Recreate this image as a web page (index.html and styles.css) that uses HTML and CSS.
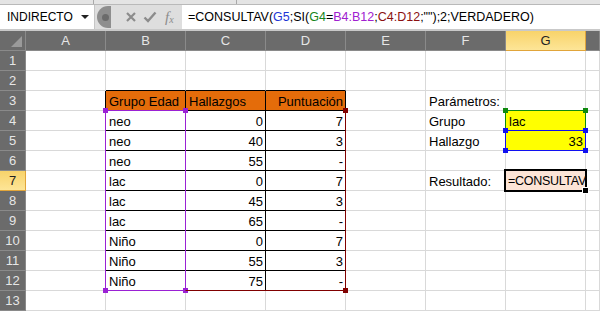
FILE: index.html
```html
<!DOCTYPE html>
<html lang="es">
<head>
    <meta charset="UTF-8">
    <title>CONSULTAV - Hallazgos</title>
    <link rel="stylesheet" href="styles.css">
</head>
<body>
    <div class="ribbon-edge"><span class="seg seg-1"></span><span class="seg seg-2"></span></div>
    <div class="formula-bar">
        <div class="name-box">
            <span>INDIRECTO</span>
            <span class="caret"></span>
        </div>
        <div class="tools">
            <span class="grip"><i></i></span>
            <svg class="tool" width="12" height="12" viewBox="0 0 12 12"><path d="M2 2 L10 10 M10 2 L2 10" stroke="#8c8c8c" stroke-width="2.2" fill="none"/></svg>
            <svg class="tool" width="14" height="12" viewBox="0 0 14 12"><path d="M1.5 6.5 L5 10 L12.5 1.5" stroke="#8c8c8c" stroke-width="2.4" fill="none"/></svg>
            <span class="fx">f<sub>x</sub></span>
        </div>
        <div class="formula">=CONSULTAV(<span class="ref-blue">G5</span>;SI(<span class="ref-green">G4</span>=<span class="ref-purple">B4:B12</span>;<span class="ref-red">C4:D12</span>;"");2;VERDADERO)</div>
    </div>
    <div class="bar-gap"></div>

    <div class="sheet">
        <table class="grid">
            <colgroup>
                <col class="c-rh"><col class="c-col"><col class="c-col"><col class="c-col"><col class="c-col"><col class="c-col"><col class="c-col"><col class="c-col"><col>
            </colgroup>
            <tr class="col-heads">
                <th class="corner"><span class="tri"></span></th>
                <th>A</th><th>B</th><th>C</th><th>D</th><th>E</th><th>F</th><th class="sel-head">G</th><th></th>
            </tr>
            <tr><th class="rh">1</th><td></td><td></td><td></td><td></td><td></td><td></td><td></td><td></td></tr>
            <tr><th class="rh">2</th><td></td><td class="tt"></td><td class="tt"></td><td class="tt"></td><td></td><td></td><td></td><td></td></tr>
            <tr><th class="rh">3</th><td class="tl"></td><td class="hd">Grupo Edad</td><td class="hd">Hallazgos</td><td class="hd num">Puntuación</td><td></td><td>Parámetros:</td><td></td><td></td></tr>
            <tr><th class="rh">4</th><td class="tl"></td><td class="t">neo</td><td class="t num">0</td><td class="t num">7</td><td></td><td>Grupo</td><td class="param">lac</td><td></td></tr>
            <tr><th class="rh">5</th><td class="tl"></td><td class="t">neo</td><td class="t num">40</td><td class="t num">3</td><td></td><td>Hallazgo</td><td class="param num">33</td><td></td></tr>
            <tr><th class="rh">6</th><td class="tl"></td><td class="t">neo</td><td class="t num">55</td><td class="t num">-</td><td></td><td></td><td></td><td></td></tr>
            <tr><th class="rh sel-head">7</th><td class="tl"></td><td class="t">lac</td><td class="t num">0</td><td class="t num">7</td><td></td><td>Resultado:</td><td class="active">=CONSULTAV</td><td></td></tr>
            <tr><th class="rh">8</th><td class="tl"></td><td class="t">lac</td><td class="t num">45</td><td class="t num">3</td><td></td><td></td><td></td><td></td></tr>
            <tr><th class="rh">9</th><td class="tl"></td><td class="t">lac</td><td class="t num">65</td><td class="t num">-</td><td></td><td></td><td></td><td></td></tr>
            <tr><th class="rh">10</th><td class="tl"></td><td class="t">Niño</td><td class="t num">0</td><td class="t num">7</td><td></td><td></td><td></td><td></td></tr>
            <tr><th class="rh">11</th><td class="tl"></td><td class="t">Niño</td><td class="t num">55</td><td class="t num">3</td><td></td><td></td><td></td><td></td></tr>
            <tr><th class="rh">12</th><td class="tl"></td><td class="t">Niño</td><td class="t num">75</td><td class="t num">-</td><td></td><td></td><td></td><td></td></tr>
            <tr><th class="rh">13</th><td></td><td></td><td></td><td></td><td></td><td></td><td></td><td></td></tr>
        </table>

        <!-- range highlights of the formula being edited -->
        <div class="range range-purple">
            <i class="h tl-h"></i><i class="h tr-h"></i><i class="h bl-h"></i><i class="h br-h"></i>
        </div>
        <div class="range range-red">
            <i class="h tr-h"></i><i class="h br-h"></i>
        </div>
        <div class="range range-green">
            <i class="h tl-h"></i><i class="h tr-h"></i>
        </div>
        <div class="range range-blue">
            <i class="h tl-h"></i><i class="h tr-h"></i><i class="h bl-h"></i><i class="h br-h"></i>
        </div>
        <div class="active-box"><i class="fill-handle"></i></div>
    </div>
</body>
</html>
```

FILE: styles.css
```css
body {
    margin: 0;
    width: 600px;
    height: 312px;
    overflow: hidden;
    background: #fff;
    font-family: "Liberation Sans", Arial, sans-serif;
    color: #000;
}

/* formula bar */
.ribbon-edge {
    height: 4px;
    background: #e4e4e4;
    border-bottom: 1px solid #b9b9b9;
    display: flex;
}
.seg {
    height: 4px;
    border-right: 1px solid #a9a9a9;
}
.seg-1 { width: 93px; }
.seg-2 { width: 142px; }
.formula-bar {
    display: flex;
    height: 24px;
    background: #dedede;
}
.name-box {
    width: 95px;
    box-sizing: border-box;
    background: #fff;
    display: flex;
    align-items: center;
    justify-content: space-between;
    padding: 0 5px 0 7px;
    font-size: 12px;
    border-right: 1px solid #c6c6c6;
}
.caret {
    width: 0;
    height: 0;
    border-left: 4px solid transparent;
    border-right: 4px solid transparent;
    border-top: 4px solid #222;
}
.tools {
    width: 87px;
    display: flex;
    align-items: center;
    gap: 6px;
    box-sizing: border-box;
}
.grip {
    width: 14px;
    height: 22px;
    border-radius: 11px 0 0 11px;
    background: #8e8e8e;
    display: flex;
    align-items: center;
    justify-content: center;
    margin-left: 2px;
    margin-right: 8px;
}
.grip i {
    width: 7px;
    height: 7px;
    border-radius: 50%;
    background: #6b6b6b;
    margin-left: 3px;
}
.fx {
    font-family: "Liberation Serif", serif;
    font-style: italic;
    font-size: 15px;
    color: #8c8c8c;
    margin-left: 2px;
}
.fx sub {
    font-size: 10px;
    vertical-align: -1px;
}
.formula {
    flex: 1;
    background: #fff;
    padding-left: 6px;
    font-size: 12.5px;
    line-height: 24px;
    white-space: nowrap;
    overflow: hidden;
}
.ref-blue { color: #1d35d6; }
.ref-green { color: #16851a; }
.ref-purple { color: #a020d0; }
.ref-red { color: #8b1010; }
.bar-gap {
    height: 2px;
    background: #c9c9c9;
}

/* sheet */
.sheet {
    position: relative;
}
.grid {
    table-layout: fixed;
    width: 600px;
    border-collapse: separate;
    border-spacing: 0;
    font-size: 13px;
}
.c-rh { width: 26px; }
.c-col { width: 80px; }
.grid th {
    background: #6b6b6b;
    color: #e6e6e6;
    font-weight: normal;
    padding: 0;
    height: 19px;
    line-height: 19px;
    border-right: 1px solid #8a8a8a;
    border-bottom: 1px solid #8a8a8a;
    text-align: center;
}
.grid .corner {
    position: relative;
}
.tri {
    position: absolute;
    right: 3px;
    bottom: 3px;
    width: 0;
    height: 0;
    border-left: 11px solid transparent;
    border-bottom: 11px solid #9a9a9a;
}
.grid th.sel-head {
    background: linear-gradient(#f8d36a, #fde597);
    color: #222;
    border-right-color: #e1a53a;
    border-bottom-color: #e1a53a;
}
.grid td {
    height: 19px;
    padding: 0 2px 0 3px;
    line-height: 17px;
    vertical-align: bottom;
    border-right: 1px solid #d9d9d9;
    border-bottom: 1px solid #d9d9d9;
    white-space: nowrap;
    overflow: hidden;
}
.grid td.num { text-align: right; }
.grid td.tt { border-bottom-color: #000; }
.grid td.tl { border-right-color: #000; }
.grid td.t {
    border-right-color: #000;
    border-bottom-color: #000;
}
.grid td.hd {
    background: #e46c0a;
    border-right-color: #000;
    border-bottom-color: #000;
}
.grid td.param { background: #ffff00; }
.grid td.active {
    background: #fce4d6;
    font-size: 12.5px;
    letter-spacing: -0.3px;
    padding-left: 2px;
}

/* range outlines, drawn over the grid */
.range {
    position: absolute;
    box-sizing: border-box;
    border: 1px solid;
}
.range-purple {
    left: 105px;
    top: 79px;
    width: 81px;
    height: 181px;
    border-color: #9a21d4;
}
.range-red {
    left: 185px;
    top: 79px;
    width: 161px;
    height: 181px;
    border-color: #800000;
    border-top-color: transparent;
    border-left-color: transparent;
}
.range-green {
    left: 505px;
    top: 79px;
    width: 81px;
    height: 21px;
    border-color: #0f8a0f;
}
.range-blue {
    left: 505px;
    top: 99px;
    width: 81px;
    height: 21px;
    border-color: #1010f0;
}
.h {
    position: absolute;
    width: 5px;
    height: 5px;
}
.range-purple .h { background: #9a21d4; }
.range-red .h { background: #800000; }
.range-green .h { background: #0f8a0f; }
.range-blue .h { background: #1010f0; }
.tl-h { left: -3px; top: -3px; }
.tr-h { right: -3px; top: -3px; }
.bl-h { left: -3px; bottom: -3px; }
.br-h { right: -3px; bottom: -3px; }
.active-box {
    position: absolute;
    left: 504px;
    top: 138px;
    width: 83px;
    height: 23px;
    box-sizing: border-box;
    border: 2px solid #000;
}
.fill-handle {
    position: absolute;
    right: -4px;
    bottom: -4px;
    width: 5px;
    height: 5px;
    background: #000;
    border: 1px solid #fff;
}
```
